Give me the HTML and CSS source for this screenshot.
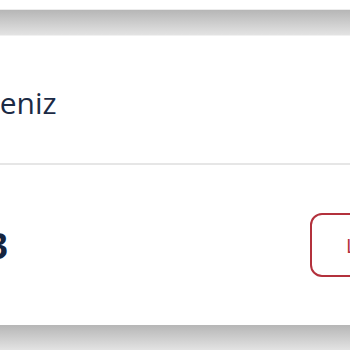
FILE: index.html
```html
<!DOCTYPE html>
<html>
<head>
<meta charset="utf-8">
<link rel="stylesheet" href="styles.css">
</head>
<body>
<div class="page">
  <div class="top-gap"></div>
  <div class="band band-top"></div>
  <div class="card">
    <div class="row row-name">
      <span class="name">Deniz</span>
    </div>
    <div class="divider"></div>
    <div class="row row-qty">
      <span class="qty">3</span>
      <button class="btn">Löschen</button>
    </div>
  </div>
  <div class="band band-bottom"></div>
</div>
</body>
</html>
```
FILE: styles.css
```css
html, body {
  margin: 0;
  padding: 0;
  background: #ffffff;
}
.page {
  width: 350px;
  height: 350px;
  overflow: hidden;
  display: flex;
  flex-direction: column;
  font-family: "Open Sans", "Noto Sans", sans-serif;
}
.top-gap {
  height: 9px;
  flex: none;
  border-bottom: 1px solid #ececec;
}
.band {
  flex: none;
  background: linear-gradient(#b6b6b6, #e3e3e3);
}
.band-top {
  height: 25px;
  border-bottom: 1px solid #f1f1f1;
}
.band-bottom {
  flex: 1;
}
.card {
  flex: none;
  display: flex;
  flex-direction: column;
  background: #ffffff;
}
.row {
  display: flex;
  align-items: center;
  justify-content: space-between;
}
.row-name {
  height: 127px;
}
.name {
  margin-left: -22px;
  font-size: 30px;
  color: #1b2a45;
  line-height: 1;
  padding-top: 6px;
}
.divider {
  height: 2px;
  background: #e6e6e6;
}
.row-qty {
  height: 160px;
}
.qty {
  margin-left: -12px;
  font-size: 35px;
  font-weight: 700;
  color: #152540;
  line-height: 1;
}
.btn {
  margin-right: -80px;
  height: 64px;
  width: 120px;
  padding: 0 0 0 34px;
  text-align: left;
  border: 2px solid #b3313c;
  border-radius: 12px;
  background: #ffffff;
  color: #b3313c;
  font-family: "Open Sans", "Noto Sans", sans-serif;
  font-size: 20px;
}
```
